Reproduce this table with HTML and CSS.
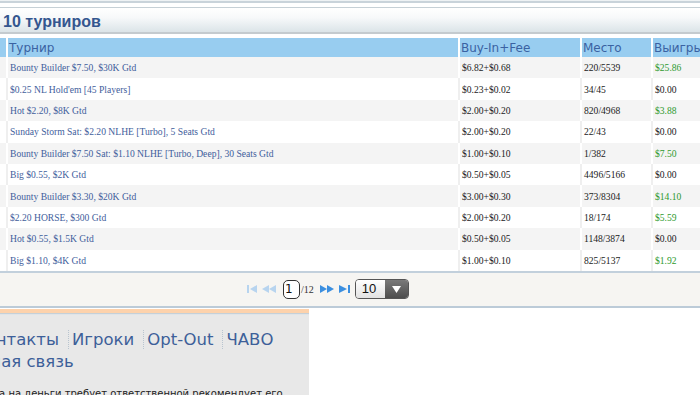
FILE: index.html
```html
<!DOCTYPE html>
<html lang="ru">
<head>
<meta charset="utf-8">
<title>Турниры</title>
<link rel="stylesheet" href="styles.css">
</head>
<body>
<div class="page">
  <div class="top-edge"></div>
  <div class="banner"><h1 class="title">10 турниров</h1></div>

  <div class="results">
    <div class="row head">
      <div class="cell"></div>
      <div class="cell">Турнир</div>
      <div class="cell">Buy-In+Fee</div>
      <div class="cell">Место</div>
      <div class="cell">Выигрыш</div>
    </div>
    <div class="row odd">
      <div class="cell"></div>
      <div class="cell"><a href="#">Bounty Builder $7.50, $30K Gtd</a></div>
      <div class="cell">$6.82+$0.68</div>
      <div class="cell">220/5539</div>
      <div class="cell win">$25.86</div>
    </div>
    <div class="row even">
      <div class="cell"></div>
      <div class="cell"><a href="#">$0.25 NL Hold'em [45 Players]</a></div>
      <div class="cell">$0.23+$0.02</div>
      <div class="cell">34/45</div>
      <div class="cell">$0.00</div>
    </div>
    <div class="row odd">
      <div class="cell"></div>
      <div class="cell"><a href="#">Hot $2.20, $8K Gtd</a></div>
      <div class="cell">$2.00+$0.20</div>
      <div class="cell">820/4968</div>
      <div class="cell win">$3.88</div>
    </div>
    <div class="row even">
      <div class="cell"></div>
      <div class="cell"><a href="#">Sunday Storm Sat: $2.20 NLHE [Turbo], 5 Seats Gtd</a></div>
      <div class="cell">$2.00+$0.20</div>
      <div class="cell">22/43</div>
      <div class="cell">$0.00</div>
    </div>
    <div class="row odd">
      <div class="cell"></div>
      <div class="cell"><a href="#">Bounty Builder $7.50 Sat: $1.10 NLHE [Turbo, Deep], 30 Seats Gtd</a></div>
      <div class="cell">$1.00+$0.10</div>
      <div class="cell">1/382</div>
      <div class="cell win">$7.50</div>
    </div>
    <div class="row even">
      <div class="cell"></div>
      <div class="cell"><a href="#">Big $0.55, $2K Gtd</a></div>
      <div class="cell">$0.50+$0.05</div>
      <div class="cell">4496/5166</div>
      <div class="cell">$0.00</div>
    </div>
    <div class="row odd">
      <div class="cell"></div>
      <div class="cell"><a href="#">Bounty Builder $3.30, $20K Gtd</a></div>
      <div class="cell">$3.00+$0.30</div>
      <div class="cell">373/8304</div>
      <div class="cell win">$14.10</div>
    </div>
    <div class="row even">
      <div class="cell"></div>
      <div class="cell"><a href="#">$2.20 HORSE, $300 Gtd</a></div>
      <div class="cell">$2.00+$0.20</div>
      <div class="cell">18/174</div>
      <div class="cell win">$5.59</div>
    </div>
    <div class="row odd">
      <div class="cell"></div>
      <div class="cell"><a href="#">Hot $0.55, $1.5K Gtd</a></div>
      <div class="cell">$0.50+$0.05</div>
      <div class="cell">1148/3874</div>
      <div class="cell">$0.00</div>
    </div>
    <div class="row even">
      <div class="cell"></div>
      <div class="cell"><a href="#">Big $1.10, $4K Gtd</a></div>
      <div class="cell">$1.00+$0.10</div>
      <div class="cell">825/5137</div>
      <div class="cell win">$1.92</div>
    </div>
  </div>

  <div class="pager">
    <svg class="nav off" width="10" height="8" viewBox="0 0 10 8"><rect x="0" y="0" width="2" height="8"/><polygon points="3,4 10,0 10,8"/></svg>
    <svg class="nav off wide" width="14" height="8" viewBox="0 0 14 8"><polygon points="0,4 7,0 7,8"/><polygon points="7,4 14,0 14,8"/></svg>
    <span class="page-input">1</span>
    <span class="page-total">/12</span>
    <svg class="nav on wide next" width="14" height="8" viewBox="0 0 14 8"><polygon points="0,0 7,4 0,8"/><polygon points="7,0 14,4 7,8"/></svg>
    <svg class="nav on" width="11" height="8" viewBox="0 0 11 8"><polygon points="0,0 8,4 0,8"/><rect x="9" y="0" width="2" height="8"/></svg>
    <span class="select">
      <span class="select-value">10</span>
      <span class="select-btn"><svg width="9" height="7" viewBox="0 0 9 7"><polygon points="0,0 9,0 4.5,7" fill="#fff"/></svg></span>
    </span>
  </div>

  <div class="footer">
    <div class="footer-links">
      <a href="#" class="flink first">Контакты</a><a href="#" class="flink">Игроки</a><a href="#" class="flink">Opt-Out</a><a href="#" class="flink">ЧАВО</a>
    </div>
    <div class="footer-links second">
      <a href="#" class="flink first">Обратная связь</a>
    </div>
    <p class="footer-note">Игра на деньги требует ответственной рекомендует его</p>
  </div>
</div>
</body>
</html>
```

FILE: styles.css
```css
html, body {
  margin: 0;
  padding: 0;
  background: #ffffff;
  overflow: hidden;
}
body {
  width: 700px;
  height: 395px;
}
.page {
  width: 700px;
}
.top-edge {
  height: 1px;
  background: #eef2f4;
  border-bottom: 2px solid #c9d3da;
  margin-bottom: 4px;
}
.banner {
  height: 24px;
  border-top: 1px solid #c6d0d6;
  border-bottom: 2px solid #c4cbcf;
  background: linear-gradient(#ffffff 0%, #f7f9fa 40%, #dbe4e8 100%);
  margin-bottom: 4px;
  overflow: hidden;
}
.title {
  margin: 0;
  padding-left: 3px;
  font-family: "Liberation Sans", Arial, sans-serif;
  font-weight: bold;
  font-size: 16px;
  line-height: 27px;
  color: #34568f;
}
.results {
  margin-left: -24px;
}
.row {
  display: grid;
  grid-template-columns: 30px 452px 122px 71px 150px;
  align-items: center;
}
.row .cell {
  height: 100%;
  display: flex;
  align-items: center;
  padding-left: 2px;
  box-sizing: border-box;
  border-left: 2px solid #ffffff;
  white-space: nowrap;
  overflow: hidden;
}
.row .cell:first-child {
  border-left: none;
}
.head {
  height: 19px;
  background: #98cdf0;
  font-family: "DejaVu Sans", sans-serif;
  font-size: 12px;
  color: #3a62a2;
}
.head .cell {
  padding-left: 1px;
}
.odd, .even {
  height: 21.4px;
  font-family: "Liberation Serif", "Times New Roman", serif;
  font-size: 9.6px;
  color: #222222;
}
.odd {
  background: #f4f4f4;
}
.even {
  background: #ffffff;
}
.even .cell {
  border-left-color: #efefef;
}
.row a {
  color: #3f609c;
  text-decoration: none;
}
.win {
  color: #2e9a2e;
}
.pager {
  height: 33px;
  border-top: 2px solid #c2d0dc;
  border-bottom: 2px solid #bccbd8;
  background: #f6f5f2;
  display: flex;
  align-items: center;
  padding-left: 247px;
  box-sizing: content-box;
}
.nav {
  display: block;
  margin-right: 5px;
}
.nav.off {
  fill: #b7d4ef;
}
.nav.on {
  fill: #3b8fe0;
}
.nav.next {
  margin-left: 6px;
}
.page-input {
  width: 14px;
  height: 17px;
  border: 1.5px solid #333333;
  border-radius: 5px;
  background: #ffffff;
  font-family: "DejaVu Sans", sans-serif;
  font-size: 12px;
  line-height: 17px;
  padding-left: 1px;
  box-sizing: content-box;
  color: #111111;
  margin-left: 2px;
}
.page-total {
  font-family: "Liberation Serif", serif;
  font-size: 10px;
  color: #333333;
  margin-left: 1px;
}
.select {
  display: flex;
  width: 54px;
  height: 20px;
  border: 1px solid #555555;
  border-radius: 4px;
  overflow: hidden;
  box-sizing: border-box;
}
.select-value {
  flex: 1;
  background: linear-gradient(#ffffff, #e2e2e2);
  font-family: "Liberation Sans", Arial, sans-serif;
  font-size: 13px;
  line-height: 18px;
  padding-left: 6px;
  color: #111111;
}
.select-btn {
  width: 23px;
  background: linear-gradient(#7a7a7a, #4d4d4d);
  display: flex;
  align-items: center;
  justify-content: center;
}
.footer {
  width: 309px;
  margin-top: 1px;
  border-top: 4px solid #fdd2ac;
  background: #e8e8e8;
  height: 90px;
  box-shadow: inset 0 1px 0 #c5d0d8, inset 0 2px 0 #e0e4e8;
  padding-top: 16px;
  box-sizing: border-box;
  overflow: hidden;
}
.footer-links {
  margin-left: -26px;
  font-family: "DejaVu Sans", sans-serif;
  font-size: 16.5px;
  line-height: 22px;
  white-space: nowrap;
}
.footer-links.second {
  margin-left: -63px;
}
.flink {
  color: #3d5f99;
  text-decoration: none;
  border-left: 1px dotted #b8c4cf;
  padding-left: 3px;
  margin-left: 9px;
}
.flink.first {
  border-left: none;
  padding-left: 0;
  margin-left: 0;
}
.footer-note {
  margin: 15px 0 0 -20px;
  font-family: "DejaVu Sans", sans-serif;
  font-size: 10px;
  color: #222222;
  white-space: nowrap;
}
```
